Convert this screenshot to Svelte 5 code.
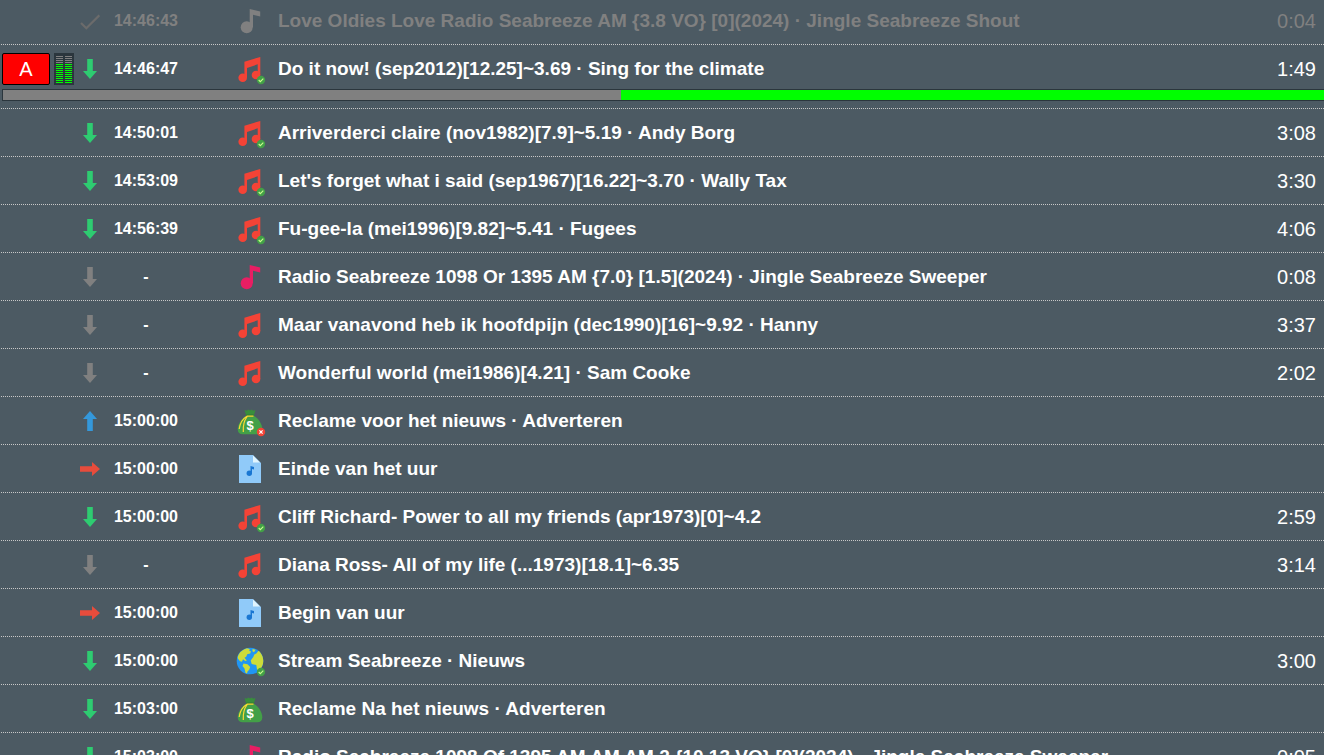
<script>
    let deck = 'A';
    let level = 10;
    let progress = 618;
    let progressMax = 1322;

    const items = [
        { state: 'done', time: '14:46:43', icon: 'jingle', title: 'Love Oldies Love Radio Seabreeze AM {3.8 VO} [0](2024) · Jingle Seabreeze Shout', length: '0:04' },
        { state: 'down', time: '14:46:47', icon: 'music', badge: 'ok', title: 'Do it now! (sep2012)[12.25]~3.69 · Sing for the climate', length: '1:49', playing: true },
        { state: 'down', time: '14:50:01', icon: 'music', badge: 'ok', title: 'Arriverderci claire (nov1982)[7.9]~5.19 · Andy Borg', length: '3:08' },
        { state: 'down', time: '14:53:09', icon: 'music', badge: 'ok', title: "Let's forget what i said (sep1967)[16.22]~3.70 · Wally Tax", length: '3:30' },
        { state: 'down', time: '14:56:39', icon: 'music', badge: 'ok', title: 'Fu-gee-la (mei1996)[9.82]~5.41 · Fugees', length: '4:06' },
        { state: 'skip', time: '-', icon: 'jingle', title: 'Radio Seabreeze 1098 Or 1395 AM {7.0} [1.5](2024) · Jingle Seabreeze Sweeper', length: '0:08' },
        { state: 'skip', time: '-', icon: 'music', title: 'Maar vanavond heb ik hoofdpijn (dec1990)[16]~9.92 · Hanny', length: '3:37' },
        { state: 'skip', time: '-', icon: 'music', title: 'Wonderful world (mei1986)[4.21] · Sam Cooke', length: '2:02' },
        { state: 'up', time: '15:00:00', icon: 'money', badge: 'error', title: 'Reclame voor het nieuws · Adverteren', length: '' },
        { state: 'right', time: '15:00:00', icon: 'file', title: 'Einde van het uur', length: '' },
        { state: 'down', time: '15:00:00', icon: 'music', badge: 'ok', title: 'Cliff Richard- Power to all my friends (apr1973)[0]~4.2', length: '2:59' },
        { state: 'skip', time: '-', icon: 'music', title: 'Diana Ross- All of my life (...1973)[18.1]~6.35', length: '3:14' },
        { state: 'right', time: '15:00:00', icon: 'file', title: 'Begin van uur', length: '' },
        { state: 'down', time: '15:00:00', icon: 'globe', badge: 'ok', title: 'Stream Seabreeze · Nieuws', length: '3:00' },
        { state: 'down', time: '15:03:00', icon: 'money', title: 'Reclame Na het nieuws · Adverteren', length: '' },
        { state: 'down', time: '15:03:00', icon: 'jingle', title: 'Radio Seabreeze 1098 Of 1395 AM AM AM 2 {10.13 VO} [0](2024) · Jingle Seabreeze Sweeper', length: '0:05' }
    ];
</script>

<ul class="playlist">
    {#each items as item}
        <li class="item {item.state}">
            <div class="row">
                <div class="deck">
                    {#if item.playing}
                        <button type="button" class="deck-button">{deck}</button>
                        <div class="meter">
                            {#each [0, 1] as channel}
                                <div class="channel">
                                    {#each Array(14) as _, i}
                                        <span class="led" class:lit={i >= 14 - level}></span>
                                    {/each}
                                </div>
                            {/each}
                        </div>
                    {/if}
                </div>

                <svg class="arrow" viewBox="0 0 20 20" aria-hidden="true">
                    {#if item.state === 'done'}
                        <path d="M1 12l5.300 5.300L19.300 4.300" fill="none" stroke="currentColor" stroke-width="2.200" />
                    {:else if item.state === 'up'}
                        <path d="M7.200 20V8H3l7-8 7 8h-4.200v12z" fill="currentColor" />
                    {:else if item.state === 'right'}
                        <path d="M0 7.200h12V3l8 7-8 7v-4.200H0z" fill="currentColor" />
                    {:else}
                        <path d="M7.200 0v12H3l7 8 7-8h-4.200V0z" fill="currentColor" />
                    {/if}
                </svg>

                <span class="time">{item.time}</span>

                <svg class="icon" viewBox="0 0 32 32" aria-hidden="true">
                    {#if item.icon === 'music'}
                        <g fill="#f44336">
                            <circle cx="8.700" cy="24.700" r="4.300" />
                            <circle cx="22" cy="22" r="4.300" />
                            <path d="M10.400 8.700L26.300 4v18h-2.600V11.300L13 15v9.700h-2.600z" />
                        </g>
                    {:else if item.icon === 'jingle'}
                        <g class="jingle">
                            <ellipse cx="12.700" cy="22.200" rx="6" ry="6" />
                            <path d="M15.700 4l10.500 2.500V11.500l-7.200-1.700v12.400h-3.300z" />
                        </g>
                    {:else if item.icon === 'file'}
                        <path fill="#90caf9" d="M5 2h14l8 8v20H5z" />
                        <path fill="#e1f5fe" d="M26 9.500h-7V2.500z" />
                        <g fill="#1976d2">
                            <circle cx="15.300" cy="20.300" r="2.700" />
                            <path d="M16.500 13l3.500 1v2.500l-2-.5v4.500h-1.500z" />
                        </g>
                    {:else if item.icon === 'money'}
                        <path fill="#388e3c" d="M10.500 5l2.500.8 1-1.200 2 1 2-1 1 1.200 2.500-.8-1.700 5.700h-7.600z" />
                        <path fill="#43a047" d="M12.500 10.500h7C24 13 28.300 19 28.300 24.500c0 3-2 4.800-5 4.800H8.700c-3 0-5-1.800-5-4.800 0-5.500 4.300-11.500 8.800-14z" />
                        <path fill="#2e7d32" d="M12.200 9.500h7.600v1.700h-7.600z" />
                        <path fill="none" stroke="#fdd835" stroke-width="1.200" d="M19.500 11.200h-6.500C9 13.500 6 18 5.200 24M13.200 11.500C10.500 15 8.800 20 9.300 27" />
                        <text x="16" y="25" text-anchor="middle" class="dollar">$</text>
                    {:else if item.icon === 'globe'}
                        <circle cx="16" cy="16" r="13.300" fill="#2196f3" />
                        <g fill="#cddc39">
                            <path d="M4.500 10C6 6.500 9.500 4 13 3.200l2.700.8-.4 2 1.700.3-.8 2.200-3 .8-1 2.500-1.700 1 2.300 2.700-1.500.5-2.300-1.800-1 2.500-2-.5-2-2.500c-.5-1.200-.2-2.500.5-3.700z" />
                            <path d="M9.500 18.500l4 .7 2.700 2.800-1 2.700-1.700 1.800-.5 2-1.500-.7-1-4.300-2-2.500z" />
                            <path d="M24.500 5.700C27 7.700 29.300 11.500 29.300 16c0 4-2 7.500-4.300 9.500l-2-1-.7-4.500-4.600-1-1-3.500 2.600-3.500 1-2.500 2-1z" />
                            <path d="M18.500 4l3 .7-1.500 2.500-1.500-1z" />
                        </g>
                    {/if}
                    {#if item.badge === 'ok'}
                        <circle cx="27" cy="27" r="4.200" fill="#43a047" />
                        <path d="M24.700 27l1.600 1.600 3-3" fill="none" stroke="#ccff90" stroke-width="1.100" />
                    {:else if item.badge === 'error'}
                        <circle cx="27" cy="27" r="4.200" fill="#f44336" />
                        <path d="M25.400 25.400l3.200 3.200M28.600 25.400l-3.200 3.200" stroke="#fff" stroke-width="1.200" />
                    {/if}
                </svg>

                <span class="title">{item.title}</span>
                <span class="length">{item.length}</span>
            </div>
            {#if item.playing}
                <progress class="progress" aria-label="Position" value={progress} max={progressMax}></progress>
            {/if}
        </li>
    {/each}
</ul>

<style>
    :global(body) {
        background: #4c5a63;
    }

    .playlist {
        display: flow-root;
        box-sizing: border-box;
        height: 100vh;
        margin: 0;
        padding: 0 0 0 1px;
        overflow: hidden;
        list-style: none;
        color: #fff;
        font-family: "Liberation Sans", Arial, sans-serif;
        font-size: 20px;
        line-height: 32px;
    }

    .item {
        padding: 8px 0 7px 1px;
        border-bottom: 1px dotted #c8c8c8;
    }

    .item:first-child {
        padding-top: 5px;
    }

    .row {
        display: grid;
        grid-template-columns: 78px 20px 92px 86px 1fr auto;
        align-items: center;
        height: 32px;
        padding-right: 8px;
    }

    .deck {
        display: flex;
        gap: 4px;
    }

    .deck-button {
        width: 48px;
        height: 32px;
        padding: 0;
        border: 1px solid #000;
        border-radius: 2px;
        background: #f00;
        color: #fff;
        font: inherit;
        line-height: 30px;
    }

    .meter {
        display: flex;
        gap: 2px;
        box-sizing: border-box;
        width: 20px;
        height: 32px;
        padding: 3px 2px 2px;
        background: #2b363d;
    }

    .channel {
        display: flex;
        flex: 1;
        flex-direction: column;
        gap: 1px;
    }

    .led {
        flex: none;
        height: 1px;
        background: #808080;
    }

    .led.lit {
        background: #0f0;
    }

    .arrow {
        width: 20px;
        height: 20px;
        color: #2ecc71;
    }

    .up .arrow {
        color: #3498db;
    }

    .right .arrow {
        color: #e74c3c;
    }

    .skip .arrow {
        color: #808080;
    }

    .done .arrow {
        color: #6b6b6b;
    }

    .time {
        font-size: 16px;
        font-weight: bold;
        text-align: center;
    }

    .icon {
        justify-self: end;
        width: 32px;
        height: 32px;
        margin-right: 12px;
    }

    .jingle {
        fill: #e91e63;
    }

    .done .jingle {
        fill: #808080;
    }

    .dollar {
        fill: #fff;
        font-size: 13px;
        font-weight: bold;
    }

    .title {
        font-size: 19px;
        font-weight: bold;
        white-space: nowrap;
    }

    .done {
        color: #808080;
    }

    .progress {
        display: block;
        box-sizing: border-box;
        width: 100%;
        height: 12px;
        margin-top: 4px;
        border: 1px solid #2b363d;
        border-right: 0;
        background: #0f0;
        appearance: none;
    }

    .progress::-webkit-progress-bar {
        background: #0f0;
    }

    .progress::-webkit-progress-value {
        background: #808080;
    }
</style>
